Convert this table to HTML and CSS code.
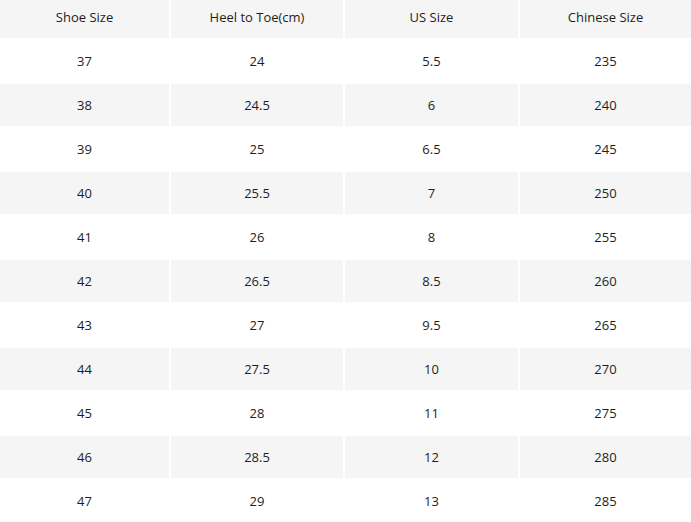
FILE: index.html
```html
<!DOCTYPE html>
<html>
<head>
<meta charset="utf-8">
<link rel="stylesheet" href="styles.css">
</head>
<body>
<table class="size-table">
  <colgroup>
    <col class="c1"><col class="c2"><col class="c3"><col class="c4">
  </colgroup>
  <thead>
    <tr class="head"><th>Shoe Size</th><th>Heel to Toe(cm)</th><th>US Size</th><th>Chinese Size</th></tr>
  </thead>
  <tbody>
    <tr><td>37</td><td>24</td><td>5.5</td><td>235</td></tr>
    <tr class="alt"><td>38</td><td>24.5</td><td>6</td><td>240</td></tr>
    <tr><td>39</td><td>25</td><td>6.5</td><td>245</td></tr>
    <tr class="alt"><td>40</td><td>25.5</td><td>7</td><td>250</td></tr>
    <tr><td>41</td><td>26</td><td>8</td><td>255</td></tr>
    <tr class="alt"><td>42</td><td>26.5</td><td>8.5</td><td>260</td></tr>
    <tr><td>43</td><td>27</td><td>9.5</td><td>265</td></tr>
    <tr class="alt"><td>44</td><td>27.5</td><td>10</td><td>270</td></tr>
    <tr><td>45</td><td>28</td><td>11</td><td>275</td></tr>
    <tr class="alt"><td>46</td><td>28.5</td><td>12</td><td>280</td></tr>
    <tr><td>47</td><td>29</td><td>13</td><td>285</td></tr>
  </tbody>
</table>
</body>
</html>
```
FILE: styles.css
```css
html, body {
  margin: 0;
  padding: 0;
  background: #fff;
  overflow: hidden;
}
.size-table {
  border-collapse: separate;
  border-spacing: 2px;
  table-layout: fixed;
  width: 695px;
  margin: -2px 0 0 -2px;
  font-family: "Open Sans", "Noto Sans", sans-serif;
  font-size: 13px;
  color: #1e1e1e;
}
.c1 { width: 169px; }
.c2 { width: 172px; }
.c3 { width: 173px; }
.c4 { width: 171px; }
.size-table th,
.size-table td {
  padding: 0;
  text-align: center;
  font-weight: normal;
  height: 42px;
  line-height: 42px;
}
.size-table .head th {
  height: 38px;
  line-height: 34px;
  vertical-align: top;
  background: #f5f5f5;
}
.size-table .alt td {
  background: #f5f5f5;
}
```
